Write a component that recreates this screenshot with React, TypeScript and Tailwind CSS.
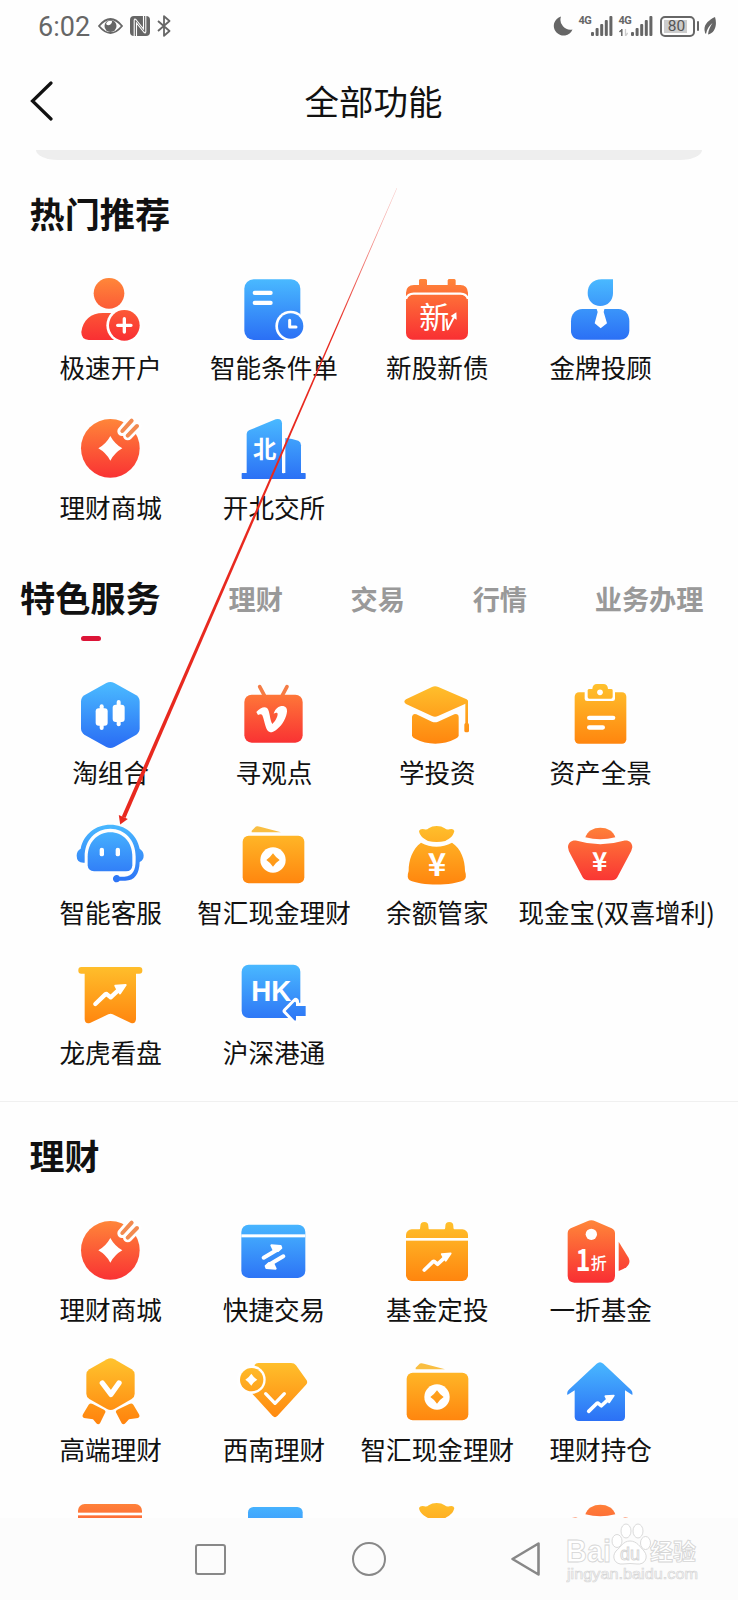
import { useId } from "react";
import type { ReactNode } from "react";

type Tone = "red" | "blue" | "gold";

const TONES: Record<Tone, [string, string]> = {
  red: ["#ff8439", "#f93033"],
  blue: ["#49b8ff", "#2b70f5"],
  gold: ["#ffc02c", "#ff850e"],
};

const CJK = "'Noto Sans CJK SC', sans-serif";

/* 72px icon tile; x/y give the origin of the drawing's own coordinate space. */
function Tile({ tone, x, y, children }: { tone: Tone; x: number; y: number; children: ReactNode }) {
  const id = useId();
  const [from, to] = TONES[tone];
  return (
    <svg className="mr-px h-[72px] w-[72px] shrink-0 overflow-visible" viewBox={`${x} ${y} 216 216`}>
      <defs>
        <linearGradient id={id} gradientUnits="userSpaceOnUse" x1={x} x2={x} y1={y + 18} y2={y + 196}>
          <stop offset="0" stopColor={from} />
          <stop offset="1" stopColor={to} />
        </linearGradient>
      </defs>
      <g fill={`url(#${id})`}>{children}</g>
    </svg>
  );
}

function Trend({ x, y, s = 1 }: { x: number; y: number; s?: number }) {
  return (
    <g transform={`translate(${x} ${y}) scale(${s})`}>
      <path d="M0 0 L30 -29 Q33 -31 36 -28 L46 -20 L74 -46" fill="none" stroke="#fff" strokeWidth="13" strokeLinecap="round" strokeLinejoin="round" />
      <path d="M60 -55 L91 -57 L74 -32 L68 -40Z" fill="#fff" stroke="#fff" strokeWidth="6" strokeLinejoin="round" />
    </g>
  );
}

function Yen({ x, y, size }: { x: number; y: number; size: number }) {
  return (
    <text x={x} y={y} fill="#fff" fontSize={size} fontWeight="700" textAnchor="middle" fontFamily={CJK}>
      ¥
    </text>
  );
}

const AddUser = () => (
  <Tile tone="red" x={222} y={282}>
    <circle cx="327" cy="340" r="46" />
    <path d="M266 480 Q244 479 244 456 C248 420 274 399 308 399 H350 V480Z" />
    <circle cx="373" cy="436" r="54" fill="#fff" />
    <circle cx="373" cy="436" r="46" />
    <path d="M353 436 H393 M373 416 V456" stroke="#fff" strokeWidth="10" strokeLinecap="round" />
  </Tile>
);

const DocClock = () => (
  <Tile tone="blue" x={712} y={282}>
    <rect x="734" y="298" width="168" height="182" rx="28" />
    <rect x="759" y="332" width="60" height="13" rx="6" fill="#fff" />
    <rect x="759" y="362" width="60" height="13" rx="6" fill="#fff" />
    <circle cx="873" cy="438" r="46" fill="#fff" />
    <circle cx="873" cy="438" r="38" />
    <path d="M870 421 V441 H889" fill="none" stroke="#fff" strokeWidth="9" strokeLinecap="round" strokeLinejoin="round" />
  </Tile>
);

const NewStock = () => (
  <Tile tone="red" x={96} y={282}>
    <path d="M111 360 V338 Q112 315 135 315 H150 V301 Q151 297 155 297 H169 Q173 297 174 301 V315 H236 V301 Q237 297 241 297 H255 Q259 297 260 301 V315 H274 Q296 316 297 338 V360Z" />
    <rect x="111" y="344" width="186" height="135" rx="20" />
    <path d="M111 357 Q116 341 134 341 H274 Q292 341 297 357" fill="none" stroke="#fff" strokeWidth="7" />
    <text x="196" y="445" fill="#fff" fontSize="90" textAnchor="middle" fontFamily={CJK}>新</text>
    <path d="M232 416 L236 448 L255 411" fill="none" stroke="#fff" strokeWidth="6" strokeLinejoin="round" />
    <path d="M262 397 L263 419 L245 408Z" fill="#fff" />
  </Tile>
);

const Advisor = () => (
  <Tile tone="blue" x={585} y={282}>
    <path d="M732 298 H698 C672 298 656 314 656 339 C656 362 672 378 694 378 C716 378 732 362 732 339Z" />
    <path d="M640 387 H748 C770 388 781 404 781 424 V452 C780 470 768 479 752 479 H634 C616 478 606 468 606 452 V424 C606 402 620 388 640 387Z" />
    <path d="M682 384 H707 L704 396 L714 430 L695 445 L677 430 L686 396Z" fill="#fff" />
  </Tile>
);

const CoinMall = () => (
  <Tile tone="red" x={223} y={42}>
    <circle cx="332" cy="145" r="88" />
    <path d="M332 108 Q345 132 368 145 Q345 158 332 182 Q319 158 296 145 Q319 132 332 108Z" fill="#fff" />
    <path d="M367 94 L394 62 M384 107 L412 78" stroke="#fff" strokeWidth="28" strokeLinecap="round" />
    <path d="M368 93 L396 62 M384 107 L412 78" stroke="#f28a50" strokeWidth="12" strokeLinecap="round" />
    <path d="M376 101 L404 70" stroke="#fff" strokeWidth="6" />
  </Tile>
);

const NorthExchange = () => (
  <Tile tone="blue" x={712} y={42}>
    <rect x="726" y="219" width="192" height="18" rx="2" />
    <path d="M741 225 V102 Q741 95 748 91 L828 58 Q846 54 847 70 V225Z" />
    <path d="M857 225 V114 Q878 116 896 122 Q904 126 904 136 V225Z" />
    <rect x="847" y="110" width="8" height="110" rx="3" fill="#fff" />
    <text x="795" y="173" fill="#fff" fontSize="70" fontWeight="700" textAnchor="middle" fontFamily={CJK}>北</text>
  </Tile>
);

const Portfolio = () => (
  <Tile tone="blue" x={223} y={57}>
    <path d="M320 69 Q332 63 344 69 L410 106 Q420 113 420 125 V205 Q420 217 410 224 L344 261 Q332 267 320 261 L254 224 Q244 217 244 205 V125 Q244 113 254 106Z" />
    <rect x="288" y="145" width="36" height="52" rx="9" fill="#fff" />
    <rect x="300" y="133" width="12" height="77" rx="6" fill="#fff" />
    <rect x="339" y="134" width="36" height="52" rx="9" fill="#fff" />
    <rect x="351" y="120" width="12" height="79" rx="6" fill="#fff" />
  </Tile>
);

const Television = () => (
  <Tile tone="red" x={713} y={57}>
    <path d="M781 80 L795 106 M863 80 L849 106" stroke="#f57c45" strokeWidth="11" strokeLinecap="round" />
    <rect x="735" y="104" width="175" height="144" rx="22" />
    <path d="M771 156 C782 144 795 138 803 144 C812 152 811 180 819 192 C828 184 838 166 834 159 C831 157 827 159 823 161 C828 145 839 137 852 138 C868 141 865 162 854 182 C843 202 825 217 813 217 C798 215 797 185 789 166 C786 160 780 163 776 165Z" fill="#fff" />
  </Tile>
);

const GradCap = () => (
  <Tile tone="gold" x={96} y={357}>
    <path d="M189 381 Q198 377 208 381 L293 418 Q301 424 293 430 L207 468 Q198 472 189 468 L111 432 Q101 425 111 418Z" />
    <path d="M129 470 Q131 459 142 463 L189 485 Q198 489 207 485 L256 463 Q268 460 269 471 V528 Q266 534 258 537 Q232 551 199 551 Q166 551 140 537 Q130 533 129 527Z" />
    <rect x="289" y="422" width="8" height="72" />
    <rect x="286" y="489" width="14" height="28" rx="5" />
  </Tile>
);

const Clipboard = () => (
  <Tile tone="gold" x={586} y={357}>
    <rect x="618" y="397" width="155" height="154" rx="13" />
    <rect x="648" y="388" width="91" height="35" rx="7" fill="#fff" />
    <path d="M657 390 Q658 387 662 387 H671 Q672 372 685 372 H704 Q717 372 718 387 H727 Q732 387 732 391 V411 Q731 416 727 416 H662 Q657 416 657 411Z" />
    <circle cx="694" cy="397" r="8.500" fill="#fff" />
    <rect x="655" y="467" width="85" height="13" rx="6.500" fill="#fff" />
    <rect x="655" y="496" width="54" height="13" rx="6.500" fill="#fff" />
  </Tile>
);

const Robot = () => (
  <Tile tone="blue" x={223} y={477}>
    <path d="M264 616 V590 C264 547 294 517 332 517 C370 517 398 547 398 590 V616 Q397 634 379 634 H283 Q265 633 264 616Z" />
    <path fillRule="evenodd" d="M243 566 C252 522 288 494 332 494 C376 494 411 522 420 566 Q432 574 432 587 Q432 600 420 606 C419 642 405 662 377 662 H360 A11 11 0 1 1 360 650 H374 C400 648 408 630 408 600 V590 C408 540 375 506 332 506 C288 506 255 540 255 590 V608 Q231 610 231 587 Q231 572 243 566Z" />
    <rect x="300" y="563" width="13" height="26" rx="6.500" fill="#fff" />
    <rect x="348" y="563" width="13" height="26" rx="6.500" fill="#fff" />
  </Tile>
);

const Wallet = () => (
  <Tile tone="gold" x={713} y={476}>
    <path d="M757 511 L766 502 Q771 495 782 499 L845 516 H757Z" fill="#f9be42" />
    <rect x="730" y="526" width="185" height="143" rx="18" />
    <circle cx="821" cy="599" r="38" fill="#fff" />
    <path d="M821 579 Q829 591 841 599 Q829 607 821 619 Q813 607 801 599 Q813 591 821 579Z" />
  </Tile>
);

const MoneyBag = ({ plain = false }: { plain?: boolean }) => (
  <Tile tone="gold" x={96} y={56}>
    <path d="M150 92 Q154 84 166 87 Q174 89 179 84 Q189 77 203 77 Q218 77 227 84 Q233 89 241 87 Q253 83 256 92 C253 108 241 115 229 122 Q203 128 177 122 C163 115 152 106 150 92Z" />
    <path d="M156 127 C186 143 218 143 249 127 C276 145 288 178 288 212 Q295 232 284 240 C250 257 156 257 122 240 Q112 232 119 212 C119 180 130 146 156 127Z" />
    {!plain && <Yen x={204} y={226} size={94} />}
  </Tile>
);

const Ingot = ({ plain = false }: { plain?: boolean }) => (
  <Tile tone="red" x={585} y={55}>
    <path d="M649 110 C655 91 673 81 694 81 C715 81 733 91 739 110 Q694 122 649 110Z" />
    <path d="M597 140 C597 124 610 117 624 120 Q694 141 764 120 C778 117 790 124 790 140 Q788 152 780 164 L745 230 Q740 239 728 239 H658 Q646 239 641 230 L606 164 Q598 152 597 140Z" />
    {!plain && <Yen x={692} y={211} size={78} />}
  </Tile>
);

const Banner = () => (
  <Tile tone="gold" x={223} y={58}>
    <rect x="236" y="82" width="192" height="20" rx="9" />
    <path d="M255 92 H409 V239 Q407 254 394 250 L339 224 Q333 220 326 224 L271 250 Q256 254 255 239Z" />
    <Trend x={287} y={193} />
  </Tile>
);

const HongKong = () => (
  <Tile tone="blue" x={712} y={57}>
    <rect x="726" y="74" width="176" height="160" rx="21" />
    <text x="755" y="183" fill="#fff" fontSize="90" fontWeight="700" textLength="120" lengthAdjust="spacingAndGlyphs" fontFamily="'Liberation Sans', sans-serif">HK</text>
    <path d="M859 213 L888 184 V198 H918 V228 H888 V242Z" fill="#fff" stroke="#fff" strokeWidth="20" strokeLinejoin="round" />
    <path d="M858 213 L884 186 Q889 184 889 190 V198 H918 V228 H889 V238 Q889 244 884 241Z" />
  </Tile>
);

const QuickTrade = () => (
  <Tile tone="blue" x={713} y={48}>
    <rect x="726" y="74" width="192" height="160" rx="22" />
    <rect x="726" y="103" width="192" height="9" fill="#fff" />
    <path d="M793 173 L836 148 M852 169 L809 194" stroke="#fff" strokeWidth="12" strokeLinecap="round" />
    <path d="M816 136 L844 138 L846 144 L836 153 L822 149Z M829 206 L801 204 L799 198 L809 189 L823 193Z" fill="#fff" stroke="#fff" strokeWidth="6" strokeLinejoin="round" />
  </Tile>
);

const FundPlan = () => (
  <Tile tone="gold" x={96} y={47}>
    <rect x="111" y="87" width="186" height="155" rx="17" />
    <path d="M150 90 Q154 88 154 77 A12 12 0 0 1 178 77 Q178 88 182 90Z M224 90 Q229 88 229 77 A12 12 0 0 1 253 77 Q253 88 258 90Z" />
    <rect x="111" y="113" width="186" height="8" fill="#fff" />
    <Trend x={166} y={209} s={0.87} />
  </Tile>
);

const PriceTag = () => (
  <Tile tone="red" x={586} y={48}>
    <path d="M597 100 Q597 90 606 85 L656 64 Q668 58 680 64 L729 85 Q739 90 739 100 V228 Q738 248 718 248 H617 Q598 247 597 228Z" />
    <path d="M750 125 L780 174 Q787 190 773 202 Q762 209 750 213Z" />
    <circle cx="668" cy="103" r="17" fill="#fff" />
    <text x="643" y="213" fill="#fff" fontSize="92" fontWeight="700" textLength="44" lengthAdjust="spacingAndGlyphs" textAnchor="middle" fontFamily={CJK}>1</text>
    <text x="690" y="207" fill="#fff" fontSize="48" fontWeight="500" textAnchor="middle" fontFamily={CJK}>折</text>
  </Tile>
);

const Medal = () => (
  <Tile tone="gold" x={223} y={467}>
    <path d="M322 477 Q333 471 344 477 L396 507 Q405 513 405 523 V580 Q405 590 396 596 L344 626 Q333 632 322 626 L269 596 Q260 590 260 580 V523 Q260 513 269 507Z" />
    <path d="M267 613 Q272 607 279 611 L313 628 Q320 632 316 638 L301 669 Q296 675 290 669 L280 657 L253 653 Q246 650 250 642Z" />
    <path d="M401 613 Q396 607 389 611 L353 628 Q346 632 350 638 L366 669 Q371 675 377 669 L388 657 L415 653 Q422 650 418 642Z" />
    <path d="M308 548 L334 582 L358 548" fill="none" stroke="#fff" strokeWidth="16" strokeLinecap="round" strokeLinejoin="round" />
  </Tile>
);

const Diamond = () => (
  <Tile tone="gold" x={712} y={467}>
    <path d="M765 494 Q768 488 776 488 H874 Q884 488 889 495 L921 540 Q925 547 919 553 L833 647 Q826 654 819 647 L755 577Z" />
    <circle cx="755" cy="538" r="43" fill="#fff" />
    <circle cx="756" cy="538" r="35" />
    <path d="M755 520 Q762 531 773 538 Q762 545 755 556 Q748 545 737 538 Q748 531 755 520Z" fill="#fff" />
    <path d="M798 580 L826 609 L854 580" fill="none" stroke="#fff" strokeWidth="10" strokeLinecap="round" strokeLinejoin="round" />
  </Tile>
);

const House = () => (
  <Tile tone="blue" x={586} y={467}>
    <path d="M596 584 Q594 574 602 567 L684 490 Q694 481 704 490 L785 567 Q793 574 791 584 L769 570 V650 Q768 662 756 662 H631 Q619 662 618 650 V570Z" />
    <Trend x={660} y={633} s={0.83} />
  </Tile>
);

const RedCard = () => (
  <Tile tone="red" x={0} y={0}>
    <rect x="12" y="24" width="192" height="170" rx="20" />
    <rect x="12" y="50" width="192" height="8" fill="#fff" />
  </Tile>
);

const BlueCard = () => (
  <Tile tone="blue" x={0} y={0}>
    <rect x="33" y="33" width="164" height="160" rx="16" />
  </Tile>
);

type Item = { icon: ReactNode; label?: string; shifted?: boolean };

const hot: Item[] = [
  { icon: <AddUser />, label: "极速开户" },
  { icon: <DocClock />, label: "智能条件单" },
  { icon: <NewStock />, label: "新股新债" },
  { icon: <Advisor />, label: "金牌投顾" },
  { icon: <CoinMall />, label: "理财商城" },
  { icon: <NorthExchange />, label: "开北交所" },
];

const featured: Item[] = [
  { icon: <Portfolio />, label: "淘组合" },
  { icon: <Television />, label: "寻观点" },
  { icon: <GradCap />, label: "学投资" },
  { icon: <Clipboard />, label: "资产全景" },
  { icon: <Robot />, label: "智能客服" },
  { icon: <Wallet />, label: "智汇现金理财" },
  { icon: <MoneyBag />, label: "余额管家" },
  { icon: <Ingot />, label: "现金宝(双喜增利)", shifted: true },
  { icon: <Banner />, label: "龙虎看盘" },
  { icon: <HongKong />, label: "沪深港通" },
];

const finance: Item[] = [
  { icon: <CoinMall />, label: "理财商城" },
  { icon: <QuickTrade />, label: "快捷交易" },
  { icon: <FundPlan />, label: "基金定投" },
  { icon: <PriceTag />, label: "一折基金" },
  { icon: <Medal />, label: "高端理财" },
  { icon: <Diamond />, label: "西南理财" },
  { icon: <Wallet />, label: "智汇现金理财" },
  { icon: <House />, label: "理财持仓" },
  { icon: <RedCard /> },
  { icon: <BlueCard /> },
  { icon: <MoneyBag plain /> },
  { icon: <Ingot plain /> },
];

function Grid({ items }: { items: Item[] }) {
  return (
    <div className="ml-[29px] grid w-[653.3px] auto-rows-[140px] grid-cols-4">
      {items.map((item, i) => (
        <div key={i} className="flex flex-col items-center">
          {item.icon}
          {item.label && (
            <span className={`mt-[3px] text-[25.6px] leading-9 whitespace-nowrap ${item.shifted ? "-mr-8" : ""}`}>{item.label}</span>
          )}
        </div>
      ))}
    </div>
  );
}

function Signal() {
  return (
    <svg className="h-5 w-[22px]" viewBox="0 0 22 20" fill="#666">
      <rect x="0" y="16" width="3" height="4" rx="1" />
      <rect x="4.600" y="12" width="3" height="8" rx="1" />
      <rect x="9.200" y="8" width="3" height="12" rx="1" />
      <rect x="13.800" y="4" width="3" height="16" rx="1" />
      <rect x="18.400" y="0" width="3" height="20" rx="1" />
    </svg>
  );
}

function StatusBar() {
  return (
    <div className="flex h-[52px] shrink-0 items-center pr-[22px] pl-[38px] text-[#666]">
      <span className="mt-[3px] w-[60px] font-['Roboto'] text-[27px] leading-none">6:02</span>
      <svg className="h-4 w-[25px]" viewBox="0 0 25 16">
        <path d="M1 8 Q12.500 -6 24 8 Q12.500 22 1 8Z" fill="none" stroke="#666" strokeWidth="1.800" />
        <circle cx="12.500" cy="8" r="6" fill="#666" />
        <path d="M8 6 A5 5 0 0 1 14 3 A3.500 3.500 0 0 1 8 6Z" fill="#fff" />
      </svg>
      <svg className="ml-[7px] h-5 w-5" viewBox="0 0 20 20">
        <rect width="20" height="20" rx="4" fill="#666" />
        <path d="M4.200 20 V4.200 Q4.400 2 6.300 4 L13.500 13 V0 M15.800 0 V15.800 Q15.600 18 13.700 16 L6.500 7 V20" fill="none" stroke="#fff" strokeWidth="1.100" />
      </svg>
      <svg className="ml-[7px] h-[22px] w-[14px]" viewBox="0 0 14 22" fill="none" stroke="#666" strokeWidth="1.800" strokeLinejoin="round">
        <path d="M1 6 L12.500 16 L7 20.800 V1.200 L12.500 6 L1 16" />
      </svg>
      <div className="ml-auto flex items-center">
        <svg className="h-5 w-5" viewBox="0 0 20 20">
          <path d="M8 0.500 A9.700 9.700 0 1 0 19.500 13.500 A10 10 0 0 1 8 0.500Z" fill="#666" />
        </svg>
        <div className="ml-[6px] flex h-5 w-[12px] flex-col font-['Roboto'] text-[11px] leading-[9px] font-bold tracking-[-0.6px]">4G</div>
        <Signal />
        <div className="ml-[6px] flex h-5 w-[12px] flex-col font-['Roboto'] text-[11px] leading-[9px] font-bold tracking-[-0.6px]">
          <span>4G</span>
          <svg className="mt-[4px] h-[7px] w-[9px]" viewBox="0 0 9 7">
            <path d="M2.800 0 V7 M0.500 3 L2.800 0.500" stroke="#666" strokeWidth="1.500" fill="none" />
            <path d="M6.500 0 V7 L8.700 4" stroke="#ccc" strokeWidth="1.300" fill="none" />
          </svg>
        </div>
        <Signal />
        <div className="ml-[7px] flex h-[21px] w-[35px] items-center rounded-[5px] border-2 border-[#666] p-[2px]">
          <div className="flex h-full w-[23px] items-center justify-center bg-[#ccc] pt-[2px] pl-[3px] font-['Roboto'] text-[15.500px] leading-none text-[#555]">80</div>
        </div>
        <div className="ml-[2px] h-[10px] w-[2.500px] rounded-sm bg-[#666]" />
        <svg className="ml-[5px] h-[18px] w-[12px]" viewBox="0 0 12 18" fill="#666">
          <path d="M11 0 C5 3 0 7 0.500 13 Q0.700 16 2 17 C3 12 5 9 8.500 6 C6 10 4.500 13 4 17.500 C11 16 13.500 8 11 0Z" />
        </svg>
      </div>
    </div>
  );
}

function Pointer() {
  return (
    <svg className="pointer-events-none absolute top-0 left-0 h-[840px] w-[420px]" viewBox="0 0 420 840">
      <defs>
        <linearGradient id="pointer-fade" gradientUnits="userSpaceOnUse" x1="397" y1="188" x2="335" y2="331">
          <stop offset="0" stopColor="#e8291f" stopOpacity="0.250" />
          <stop offset="1" stopColor="#e8291f" />
        </linearGradient>
      </defs>
      <path d="M396.700 188 L397.100 188.200 L125.500 818 L121.800 816.500Z" fill="url(#pointer-fade)" />
      <path d="M120.200 824.500 L118.800 815 L127.800 819Z" fill="#e8291f" />
    </svg>
  );
}

function Watermark() {
  return (
    <svg className="pointer-events-none absolute right-[34px] bottom-[14px] h-[70px] w-[138px]" viewBox="0 0 138 70" fill="#fff" stroke="#d6d6d6" strokeWidth="0.900">
      <text x="0" y="46" fontSize="31" fontWeight="700" textLength="45" lengthAdjust="spacingAndGlyphs" fontFamily="'Liberation Sans', sans-serif">Bai</text>
      <ellipse cx="51" cy="25" rx="5" ry="6.500" />
      <ellipse cx="60" cy="15" rx="5" ry="7" />
      <ellipse cx="72" cy="15" rx="5" ry="7" />
      <ellipse cx="79.500" cy="27" rx="5" ry="6.500" />
      <path d="M64 25 C71 25 74 31 78 35 C83 41 79 49 71 48 Q64 47 57 48 C49 49 45 41 50 35 C55 31 57 25 64 25Z" />
      <text x="64" y="44" fontSize="18" textAnchor="middle" fontFamily="'Liberation Sans', sans-serif">du</text>
      <text x="84" y="44" fontSize="23" fontWeight="700" textLength="46" fontFamily={CJK}>经验</text>
      <text x="1" y="63" fontSize="15.500" textLength="131" lengthAdjust="spacingAndGlyphs" strokeWidth="0.700" fontFamily="'Liberation Sans', sans-serif">jingyan.baidu.com</text>
    </svg>
  );
}

export default function App() {
  return (
    <div className="relative flex h-[1600px] w-[738px] flex-col overflow-hidden bg-[#fefefe] font-['Noto_Sans_CJK_SC',sans-serif] text-[#111]">
      <StatusBar />
      <header className="flex h-[98px] shrink-0 items-center pl-[30px]">
        <svg className="h-10 w-[24px]" viewBox="0 0 24 40" fill="none" stroke="#111" strokeWidth="3.200">
          <path d="M21 2 L2.500 20 L21 38" strokeLinecap="round" />
        </svg>
        <h1 className="mb-[2px] ml-[250.500px] text-[34.500px] leading-10">全部功能</h1>
      </header>
      <main className="flex min-h-0 flex-1 flex-col overflow-hidden">
        <div className="ml-[36px] h-[10px] w-[666px] shrink-0 bg-[#eee] [border-radius:0_0_22px_22px/0_0_10px_10px]" />
        <h2 className="mt-[33px] ml-[29.500px] text-[35.200px] leading-10 font-bold">热门推荐</h2>
        <div className="mt-[41px]">
          <Grid items={hot} />
        </div>
        <nav className="mt-[24px] flex h-10 shrink-0 items-center pl-[20px] text-[27.200px] font-bold whitespace-nowrap text-[#999]">
          <span className="mb-[2px] w-[140px] text-[35.200px] leading-10 text-[#111]">特色服务</span>
          <span className="ml-[68.500px]">理财</span>
          <span className="ml-[67.700px]">交易</span>
          <span className="ml-[67.700px]">行情</span>
          <span className="ml-[67.700px]">业务办理</span>
        </nav>
        <div className="mt-[17.500px] ml-[81px] h-[5.500px] w-[20px] shrink-0 rounded-full bg-[#dc1437]" />
        <div className="mt-[38px]">
          <Grid items={featured} />
        </div>
        <div className="mt-[2px] h-px shrink-0 bg-[#f0f0f0]" />
        <h2 className="mt-[33px] ml-[29.500px] text-[35px] leading-10 font-bold">理财</h2>
        <div className="mt-[41px]">
          <Grid items={finance} />
        </div>
      </main>
      <footer className="flex h-[82px] shrink-0 items-center bg-[#fcfcfc] pl-[195px]">
        <div className="h-[31px] w-[31px] rounded-[3px] border-[2.500px] border-[#888]" />
        <div className="ml-[126px] h-[34px] w-[34px] rounded-full border-[2.500px] border-[#888]" />
        <svg className="ml-[124px] h-9 w-[31px]" viewBox="0 0 31 36" fill="none" stroke="#888" strokeWidth="2.600" strokeLinejoin="round">
          <path d="M28.500 2.500 V33.500 L2.500 18Z" />
        </svg>
      </footer>
      <Pointer />
      <Watermark />
    </div>
  );
}
